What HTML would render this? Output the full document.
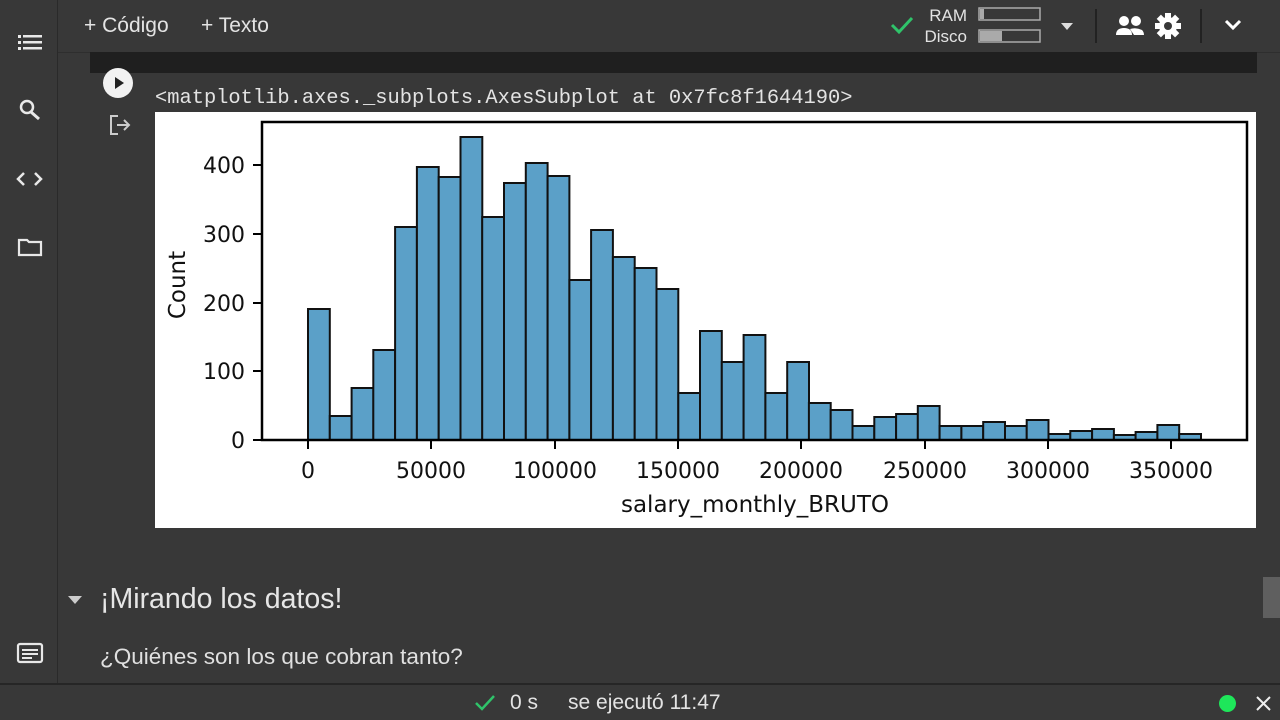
<!DOCTYPE html>
<html><head><meta charset="utf-8"><style>
body{margin:0;width:1280px;height:720px;background:#383838;overflow:hidden;position:relative;font-family:"Liberation Sans",sans-serif;color:#e3e3e3}
.a{position:absolute}
</style></head><body>
<div class="a" style="left:0;top:0;width:57px;height:685px;background:#383838;border-right:1px solid #2a2a2a"></div>
<div class="a" style="left:58px;top:0;width:1222px;height:52px;background:#383838;border-bottom:1px solid #2e2e2e"></div>
<svg class="a" style="left:0;top:0" width="58" height="685">
<g fill="#e8e8e8">
<rect x="18" y="35" width="3" height="3"/><rect x="23" y="35" width="19" height="2.5"/>
<rect x="18" y="41" width="3" height="3"/><rect x="23" y="41" width="19" height="2.5"/>
<rect x="18" y="47" width="3" height="3"/><rect x="23" y="47" width="19" height="2.5"/>
</g>
<circle cx="27" cy="107" r="6" fill="none" stroke="#e8e8e8" stroke-width="2.5"/>
<line x1="31" y1="112" x2="39" y2="119" stroke="#e8e8e8" stroke-width="3"/>
<path d="M24 173 L18 179 L24 185 M35 173 L41 179 L35 185" fill="none" stroke="#e8e8e8" stroke-width="2.5"/>
<path d="M19 240 H27 L29 242 H41 V255 H19 Z" fill="none" stroke="#e8e8e8" stroke-width="2.2"/>
<rect x="18" y="644" width="24" height="18" rx="2" fill="none" stroke="#e8e8e8" stroke-width="2.2"/>
<rect x="22" y="649" width="16" height="2" fill="#e8e8e8"/><rect x="22" y="653" width="16" height="2" fill="#e8e8e8"/><rect x="22" y="657" width="10" height="2" fill="#e8e8e8"/>
</svg>
<div class="a" style="left:84px;top:14px;font-size:21px">+ Código</div>
<div class="a" style="left:201px;top:14px;font-size:21px">+ Texto</div>
<svg class="a" style="left:880px;top:0" width="400" height="52">
<path d="M12 25 L19 32 L32 18" fill="none" stroke="#2fc36a" stroke-width="3"/>
<rect x="99" y="8" width="61" height="12" fill="none" stroke="#aaa" stroke-width="1.5"/><rect x="100" y="9" width="4" height="10" fill="#aaa"/>
<rect x="99" y="30" width="61" height="12" fill="none" stroke="#aaa" stroke-width="1.5"/><rect x="100" y="31" width="22" height="10" fill="#aaa"/>
<path d="M181 23 H193 L187 30 Z" fill="#ddd"/>
<line x1="216" y1="9" x2="216" y2="43" stroke="#222" stroke-width="2"/>
<circle cx="244" cy="21" r="5" fill="#fff"/><circle cx="256" cy="21" r="5" fill="#fff"/>
<path d="M236 35 Q236 28 244 28 Q252 28 252 35 Z M250 29 Q256 27 262 30 Q264 32 264 35 H254 Z" fill="#fff"/>
<g transform="translate(288,26)" fill="#fff"><circle r="9"/><rect x="-3" y="-13" width="6" height="26"/><rect x="-13" y="-3" width="26" height="6"/><rect x="-3" y="-13" width="6" height="26" transform="rotate(45)"/><rect x="-3" y="-13" width="6" height="26" transform="rotate(-45)"/><circle r="4" fill="#383838"/></g>
<line x1="321" y1="9" x2="321" y2="43" stroke="#222" stroke-width="2"/>
<path d="M346 21 L353 28 L360 21" fill="none" stroke="#fff" stroke-width="3"/>
</svg>
<div class="a" style="left:919px;top:5px;font-size:17px;line-height:21px;text-align:right;width:48px">RAM<br>Disco</div>
<div class="a" style="left:90px;top:52px;width:1167px;height:21px;background:#1f1f1f"></div>
<div class="a" style="left:103px;top:68px;width:30px;height:30px;border-radius:50%;background:#f2f2f2"></div>
<svg class="a" style="left:103px;top:68px" width="30" height="30"><path d="M12 9 L21 15 L12 21 Z" fill="#222"/></svg>
<svg class="a" style="left:108px;top:113px" width="26" height="24"><path d="M10 3 H3 V21 H10 M9 12 H21 M16 7 L21 12 L16 17" fill="none" stroke="#ccc" stroke-width="2"/></svg>
<div class="a" style="left:155px;top:87px;font-family:'Liberation Mono',monospace;font-size:20.4px;color:#e3e3e3">&lt;matplotlib.axes._subplots.AxesSubplot at 0x7fc8f1644190&gt;</div>
<svg class="a" style="left:155px;top:112px" width="1101" height="416" viewBox="155 112 1101 416" font-family="DejaVu Sans,sans-serif">
<rect x="155" y="112" width="1101" height="416" fill="#fff"/>
<g fill="#5ba0c8" stroke="#111" stroke-width="2">
<rect x="308.0" y="309" width="21.8" height="131"/>
<rect x="329.8" y="416" width="21.8" height="24"/>
<rect x="351.6" y="388" width="21.8" height="52"/>
<rect x="373.3" y="350" width="21.8" height="90"/>
<rect x="395.1" y="227" width="21.8" height="213"/>
<rect x="416.9" y="167" width="21.8" height="273"/>
<rect x="438.7" y="177" width="21.8" height="263"/>
<rect x="460.5" y="137" width="21.8" height="303"/>
<rect x="482.2" y="217" width="21.8" height="223"/>
<rect x="504.0" y="183" width="21.8" height="257"/>
<rect x="525.8" y="163" width="21.8" height="277"/>
<rect x="547.6" y="176" width="21.8" height="264"/>
<rect x="569.4" y="280" width="21.8" height="160"/>
<rect x="591.1" y="230" width="21.8" height="210"/>
<rect x="612.9" y="257" width="21.8" height="183"/>
<rect x="634.7" y="268" width="21.8" height="172"/>
<rect x="656.5" y="289" width="21.8" height="151"/>
<rect x="678.3" y="393" width="21.8" height="47"/>
<rect x="700.0" y="331" width="21.8" height="109"/>
<rect x="721.8" y="362" width="21.8" height="78"/>
<rect x="743.6" y="335" width="21.8" height="105"/>
<rect x="765.4" y="393" width="21.8" height="47"/>
<rect x="787.2" y="362" width="21.8" height="78"/>
<rect x="808.9" y="403" width="21.8" height="37"/>
<rect x="830.7" y="410" width="21.8" height="30"/>
<rect x="852.5" y="426" width="21.8" height="14"/>
<rect x="874.3" y="417" width="21.8" height="23"/>
<rect x="896.1" y="414" width="21.8" height="26"/>
<rect x="917.8" y="406" width="21.8" height="34"/>
<rect x="939.6" y="426" width="21.8" height="14"/>
<rect x="961.4" y="426" width="21.8" height="14"/>
<rect x="983.2" y="422" width="21.8" height="18"/>
<rect x="1005.0" y="426" width="21.8" height="14"/>
<rect x="1026.7" y="420" width="21.8" height="20"/>
<rect x="1048.5" y="434" width="21.8" height="6"/>
<rect x="1070.3" y="431" width="21.8" height="9"/>
<rect x="1092.1" y="429" width="21.8" height="11"/>
<rect x="1113.9" y="435" width="21.8" height="5"/>
<rect x="1135.6" y="432" width="21.8" height="8"/>
<rect x="1157.4" y="425" width="21.8" height="15"/>
<rect x="1179.2" y="434" width="21.8" height="6"/>
</g>
<rect x="262" y="122" width="985" height="318" fill="none" stroke="#000" stroke-width="2.5"/>
<g stroke="#000" stroke-width="2">
<line x1="253" y1="440" x2="262" y2="440"/><line x1="253" y1="371" x2="262" y2="371"/><line x1="253" y1="303" x2="262" y2="303"/><line x1="253" y1="234" x2="262" y2="234"/><line x1="253" y1="165" x2="262" y2="165"/>
<line x1="308" y1="440" x2="308" y2="449"/><line x1="431" y1="440" x2="431" y2="449"/><line x1="555" y1="440" x2="555" y2="449"/><line x1="678" y1="440" x2="678" y2="449"/><line x1="801" y1="440" x2="801" y2="449"/><line x1="925" y1="440" x2="925" y2="449"/><line x1="1048" y1="440" x2="1048" y2="449"/><line x1="1171" y1="440" x2="1171" y2="449"/>
</g>
<g font-size="22" fill="#111" text-anchor="end">
<text x="245" y="448">0</text><text x="245" y="379">100</text><text x="245" y="311">200</text><text x="245" y="242">300</text><text x="245" y="173">400</text>
</g>
<g font-size="22" fill="#111" text-anchor="middle">
<text x="308" y="478">0</text><text x="431" y="478">50000</text><text x="555" y="478">100000</text><text x="678" y="478">150000</text><text x="801" y="478">200000</text><text x="925" y="478">250000</text><text x="1048" y="478">300000</text><text x="1171" y="478">350000</text>
<text x="755" y="512" font-size="23">salary_monthly_BRUTO</text>
<text transform="translate(185,285) rotate(-90)" font-size="23">Count</text>
</g>
</svg>
<svg class="a" style="left:66px;top:594px" width="18" height="12"><path d="M2 2 H16 L9 10 Z" fill="#ccc"/></svg>
<div class="a" style="left:100px;top:583px;font-size:28.5px;color:#e6e6e6">¡Mirando los datos!</div>
<div class="a" style="left:100px;top:644px;font-size:22.5px;color:#e0e0e0">¿Quiénes son los que cobran tanto?</div>
<div class="a" style="left:1263px;top:577px;width:17px;height:41px;background:#5f5f5f"></div>
<div class="a" style="left:0;top:683px;width:1280px;height:2px;background:#262626"></div>
<div class="a" style="left:0;top:685px;width:1280px;height:35px;background:#383838"></div>
<svg class="a" style="left:472px;top:690px" width="26" height="26"><path d="M4 13 L10 19 L22 6" fill="none" stroke="#2fc36a" stroke-width="2.5"/></svg>
<div class="a" style="left:510px;top:691px;font-size:21px">0 s</div>
<div class="a" style="left:568px;top:691px;font-size:21px">se ejecutó 11:47</div>
<div class="a" style="left:1219px;top:695px;width:17px;height:17px;border-radius:50%;background:#1ee65a"></div>
<svg class="a" style="left:1254px;top:694px" width="20" height="20"><path d="M3 3 L16 16 M16 3 L3 16" stroke="#eee" stroke-width="2"/></svg>
</body></html>
